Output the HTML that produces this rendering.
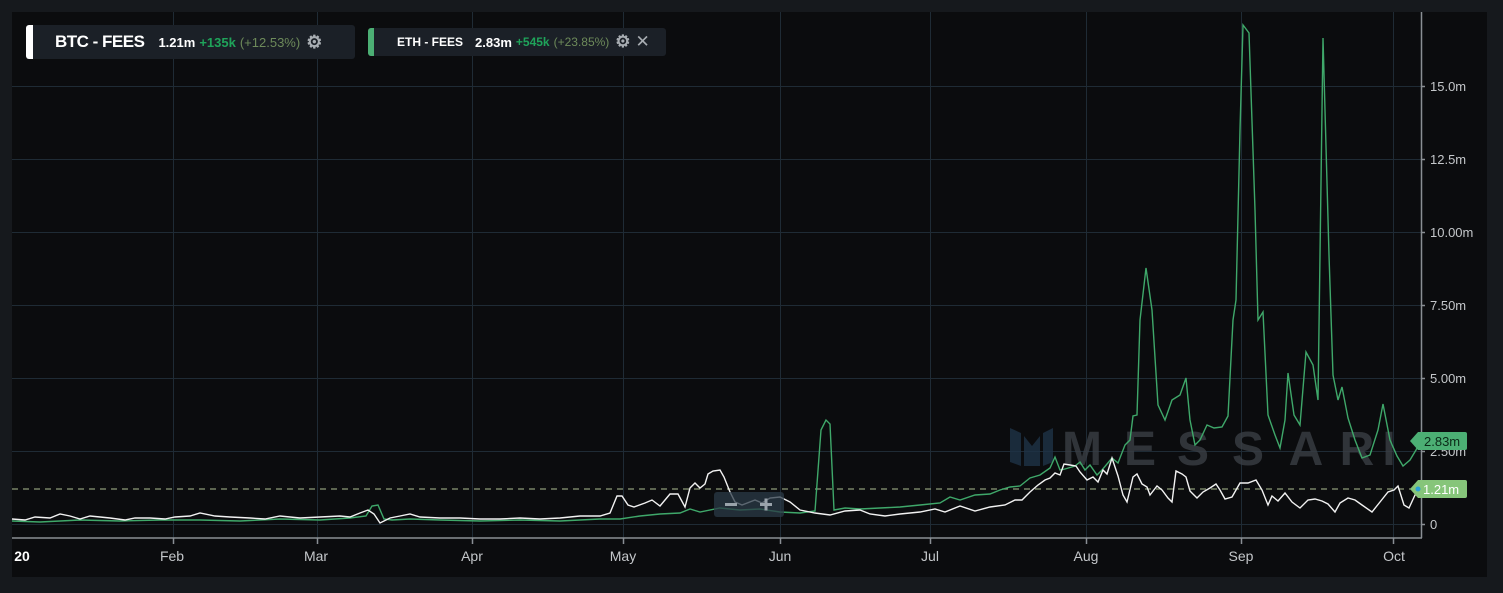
<!DOCTYPE html>
<html><head><meta charset="utf-8"><style>
html,body{margin:0;padding:0;background:#16191d;width:1503px;height:593px;overflow:hidden;font-family:"Liberation Sans",sans-serif}
svg{position:absolute;left:0;top:0}
.leg{position:absolute;background:#1b2027;border-radius:3px;height:30px;display:flex;align-items:center;white-space:nowrap;color:#fff;font-weight:bold}
</style></head><body>
<svg width="1503" height="593" viewBox="0 0 1503 593">
<rect x="12" y="12" width="1475" height="565" fill="#0b0c0e"/>
<g stroke="#1f2b35" stroke-width="1">
<line x1="12" y1="86.5" x2="1421" y2="86.5"/><line x1="12" y1="159.5" x2="1421" y2="159.5"/>
<line x1="12" y1="232.5" x2="1421" y2="232.5"/><line x1="12" y1="305.5" x2="1421" y2="305.5"/>
<line x1="12" y1="378.5" x2="1421" y2="378.5"/><line x1="12" y1="451.5" x2="1421" y2="451.5"/>
<line x1="12" y1="524.5" x2="1421" y2="524.5"/>
<line x1="173.5" y1="12" x2="173.5" y2="538"/><line x1="317.5" y1="12" x2="317.5" y2="538"/>
<line x1="472.5" y1="12" x2="472.5" y2="538"/><line x1="623.5" y1="12" x2="623.5" y2="538"/>
<line x1="780.5" y1="12" x2="780.5" y2="538"/><line x1="930.5" y1="12" x2="930.5" y2="538"/>
<line x1="1086.5" y1="12" x2="1086.5" y2="538"/><line x1="1241.5" y1="12" x2="1241.5" y2="538"/>
<line x1="1393.5" y1="12" x2="1393.5" y2="538"/>
</g>
<g stroke="#8a8f94" stroke-width="1.5">
<line x1="12" y1="538" x2="1422" y2="538"/><line x1="1421.5" y1="12" x2="1421.5" y2="538"/>
<line x1="173.5" y1="538" x2="173.5" y2="544"/><line x1="317.5" y1="538" x2="317.5" y2="544"/>
<line x1="472.5" y1="538" x2="472.5" y2="544"/><line x1="623.5" y1="538" x2="623.5" y2="544"/>
<line x1="780.5" y1="538" x2="780.5" y2="544"/><line x1="930.5" y1="538" x2="930.5" y2="544"/>
<line x1="1086.5" y1="538" x2="1086.5" y2="544"/><line x1="1241.5" y1="538" x2="1241.5" y2="544"/>
<line x1="1393.5" y1="538" x2="1393.5" y2="544"/>
<line x1="1421" y1="86.5" x2="1425" y2="86.5"/><line x1="1421" y1="159.5" x2="1425" y2="159.5"/>
<line x1="1421" y1="232.5" x2="1425" y2="232.5"/><line x1="1421" y1="305.5" x2="1425" y2="305.5"/>
<line x1="1421" y1="378.5" x2="1425" y2="378.5"/><line x1="1421" y1="451.5" x2="1425" y2="451.5"/>
<line x1="1421" y1="524.5" x2="1425" y2="524.5"/>
</g>
<g fill="#c4c7ca" font-size="13">
<text x="1430" y="91">15.0m</text><text x="1430" y="164">12.5m</text><text x="1430" y="237">10.00m</text>
<text x="1430" y="310">7.50m</text><text x="1430" y="383">5.00m</text><text x="1430" y="456">2.50m</text>
<text x="1430" y="529">0</text>
</g>
<g fill="#c4c7ca" font-size="14" text-anchor="middle">
<text x="22" y="561" fill="#fff" font-weight="bold">20</text>
<text x="172" y="561">Feb</text><text x="316" y="561">Mar</text><text x="472" y="561">Apr</text>
<text x="623" y="561">May</text><text x="780" y="561">Jun</text><text x="930" y="561">Jul</text>
<text x="1086" y="561">Aug</text><text x="1241" y="561">Sep</text><text x="1394" y="561">Oct</text>
</g>
<!-- watermark -->
<g>
<path d="M1010 428 L1021 433 L1021 466 L1010 462Z M1024 436 L1032 446 L1040 436 L1040 466 L1024 466Z M1043 433 L1053 428 L1053 462 L1043 466Z" fill="#1e3347" opacity="0.8"/>
<g font-size="48" font-weight="bold" fill="#3a3e44" text-anchor="middle" opacity="0.8">
<text x="1082" y="465">M</text><text x="1140" y="465">E</text><text x="1193" y="465">S</text>
<text x="1248" y="465">S</text><text x="1306" y="465">A</text><text x="1357" y="465">R</text><text x="1389" y="465">I</text>
</g>
</g>
<line x1="12" y1="489" x2="1421" y2="489" stroke="#8c9a78" stroke-width="1.3" stroke-dasharray="6,5"/>
<polyline fill="none" stroke="#3fa86a" stroke-width="1.4" points="12,521 40,522 80,520 120,521 160,520 200,520 240,521 280,519 320,520 350,518 366,516 372,506 378,505 384,519 392,520 410,519 440,520 480,521 520,520 560,521 600,519 620,519 640,516 660,514 680,513 690,509 700,512 720,508 740,510 760,509 780,512 800,513 815,511 821,430 826,420 830,424 834,510 845,508 860,509 880,508 900,507 920,505 940,503 950,497 960,500 975,495 990,494 1000,490 1010,487 1020,486 1030,478 1040,475 1050,468 1055,457 1060,470 1065,469 1075,466 1080,462 1085,470 1090,465 1097,475 1102,470 1112,458 1118,463 1125,445 1130,440 1133,416 1137,415 1140,320 1146,268 1152,310 1158,405 1165,420 1172,400 1180,395 1186,378 1190,420 1195,445 1200,440 1207,425 1214,428 1222,427 1228,416 1233,320 1236,300 1240,130 1243,25 1249,33 1255,210 1258,320 1263,312 1268,415 1275,435 1280,448 1285,420 1288,373 1294,415 1300,425 1306,352 1313,365 1318,400 1323,38 1329,255 1333,375 1338,400 1342,387 1348,418 1355,440 1362,458 1370,455 1378,430 1383,404 1390,440 1397,456 1403,466 1410,460 1416,450 1420,442"/>
<polyline fill="none" stroke="#f2f2f2" stroke-width="1.4" points="12,519 25,520 35,517 50,518 60,514 70,516 80,519 90,516 100,517 110,518 125,520 135,518 150,518 165,519 175,517 190,516 200,513 215,516 230,517 250,518 265,519 280,516 300,518 320,517 340,516 350,517 360,513 368,510 374,514 380,523 390,518 400,516 410,514 420,517 440,518 460,518 480,519 500,519 520,518 540,519 560,518 580,516 600,516 610,513 617,496 622,496 628,505 634,507 645,503 652,500 660,506 670,494 678,494 685,507 690,488 695,483 700,488 705,484 708,474 713,471 720,470 724,477 730,492 735,502 742,505 755,500 762,503 770,498 780,497 790,502 800,510 815,513 830,515 845,511 860,510 870,514 885,516 900,514 920,512 935,509 945,512 960,506 975,511 990,507 1005,505 1015,500 1022,500 1030,492 1038,485 1045,480 1050,478 1055,473 1060,475 1064,464 1070,465 1076,466 1080,472 1087,480 1093,477 1098,482 1103,470 1107,474 1112,458 1118,476 1123,495 1127,502 1133,477 1137,474 1142,484 1147,487 1150,495 1157,486 1162,490 1168,498 1172,502 1176,471 1182,474 1186,477 1190,491 1197,498 1203,492 1210,488 1216,484 1220,490 1225,499 1232,497 1240,483 1248,483 1256,480 1262,490 1268,505 1272,496 1278,501 1285,493 1292,502 1300,508 1308,500 1315,499 1322,501 1328,504 1335,512 1340,503 1348,498 1355,500 1362,505 1372,512 1380,502 1388,492 1394,490 1398,486 1404,505 1409,508 1415,495 1420,490"/>
<rect x="714" y="492" width="70" height="25" rx="3" fill="#2b3a47" opacity="0.75"/>
<rect x="725" y="503" width="12" height="3" fill="#9aa3ab"/>
<rect x="760" y="503" width="12" height="3" fill="#9aa3ab"/><rect x="764.5" y="498.5" width="3" height="12" fill="#9aa3ab"/>
<path d="M1410 441 L1418 432 L1465 432 Q1467 432 1467 434 L1467 448 Q1467 450 1465 450 L1418 450Z" fill="#4caf74"/>
<text x="1424" y="446" font-size="13" fill="#0b2a18">2.83m</text>
<path d="M1410 489 L1418 480 L1465 480 Q1467 480 1467 482 L1467 496 Q1467 498 1465 498 L1418 498Z" fill="#86c57a"/>
<circle cx="1418" cy="489" r="2.5" fill="#2aa0d6"/>
<text x="1423" y="494" font-size="13" fill="#fff">1.21m</text>
</svg>

<div class="leg" style="left:26px;top:25px;width:329px;height:34px">
<div style="width:7px;height:34px;background:#fff;border-radius:3px 0 0 3px"></div>
<span style="margin-left:22px;font-size:17px;letter-spacing:-0.5px">BTC - FEES</span>
<span style="margin-left:14px;font-size:13px">1.21m</span>
<span style="margin-left:4px;font-size:13px;color:#1fa35a">+135k</span>
<span style="margin-left:4px;font-size:13px;color:#6d8a5a;font-weight:normal">(+12.53%)</span>
<span style="margin-left:6px;font-size:18px;color:#a8adb2">⚙</span>
</div>
<div class="leg" style="left:368px;top:28px;width:298px;height:28px">
<div style="width:6px;height:28px;background:#4caf74;border-radius:3px 0 0 3px"></div>
<span style="margin-left:23px;font-size:12px">ETH - FEES</span>
<span style="margin-left:12px;font-size:13px">2.83m</span>
<span style="margin-left:4px;font-size:12px;color:#1fa35a">+545k</span>
<span style="margin-left:4px;font-size:12px;color:#6d8a5a;font-weight:normal">(+23.85%)</span>
<span style="margin-left:6px;font-size:17px;color:#a8adb2">⚙</span>
<span style="margin-left:5px;font-size:17px;color:#a8adb2;font-weight:normal">✕</span>
</div>
</body></html>
